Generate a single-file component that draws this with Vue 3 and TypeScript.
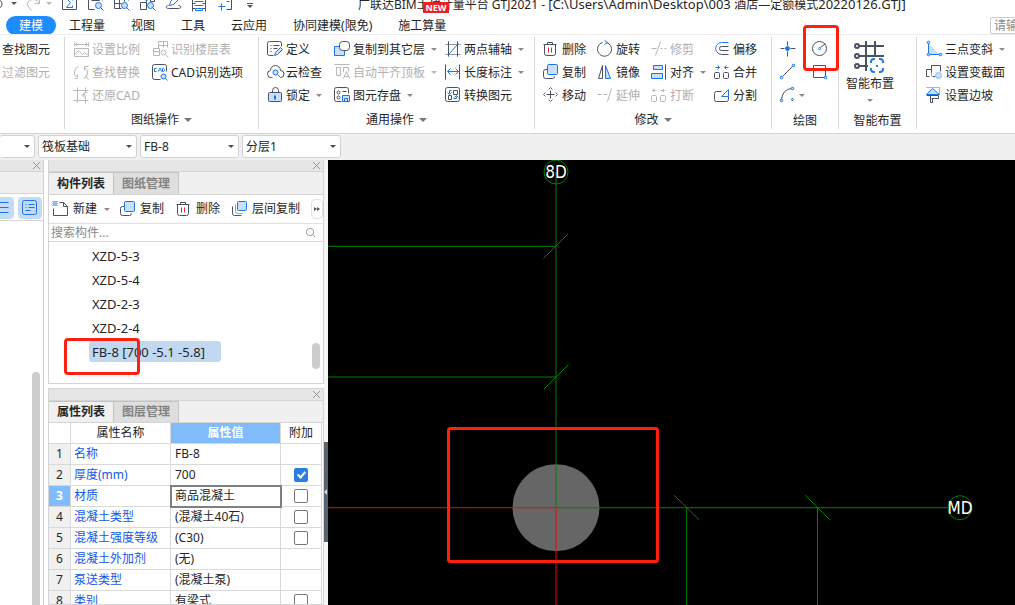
<script setup lang="ts">
import { ref } from 'vue'

interface Tool { icon: string; text: string; off?: boolean; arrow?: boolean }
interface Group { id: string; label: string; more: boolean; cols: Tool[][] }
interface Prop { name: string; value: string; check: boolean | null }

const icons: Record<string, string> = {
  undo: '<path d="M-2 4h2a4.500 4.500 0 0 1 0 9h-2"/>',
  redo: '<path d="M10 8h5V3M15 8C11 1 2 4 3 10l4 5"/>',
  sum: '<path d="M1 0v14h14V0"/><path class="b" d="M11 5V3H5l4 4-4 5h6v-2"/>',
  sheetFind: '<path d="M1 0v14h6M15 0v5M4 5h8V0M6 2v3M8 2v3M10 2v3"/><circle class="b l" cx="11" cy="10" r="3"/><path class="b" d="M13 12l3 3"/>',
  tableFind: '<path d="M1 0v13h7M6 0v13M11 0v6M15 0v5M1 3h14M1 8h7"/><circle class="b l" cx="11" cy="10" r="3"/><path class="b" d="M13 12l3 3"/>',
  floorFind: '<path d="M7 3v4H1v7h6V7M11 0v6h4V0M1 3h3"/><path class="b bf" d="M4 3l3-3 3 3-3 2z"/><circle class="b l" cx="11" cy="10" r="3"/><path class="b" d="M13 12l3 3"/>',
  pen: '<path class="b" d="M4 10l1-4 8-8 3 3-8 8z"/><path d="M3 10c-3 0-3 3 0 3h10c3 0 3-3 0-3"/>',
  beam: '<path d="M1 0v16M14 0v16M1 3h3M1 8h3M1 13h3M11 3h3M11 8h3M11 13h3"/><path class="b" d="M4 0v3h7V0M3 6h9M3 10h9M4 13h7v2H4z"/>',
  frame: '<path d="M9 0h5v14H9M2 4V0h3"/><path class="b" d="M4 8v7M1 11h7M9 6h3"/>',
  scale: '<path d="M1 1v4M15 1v4M1 3h14M4 1L2 3l2 2M12 1l2 2-2 2M1 7h14v8H1zM1 13l4-4 4 4 2-2 4 3"/>',
  replace: '<path d="M5 2a6 6 0 0 0-1 11M4 13v-3M4 14H1M10 14a6 6 0 0 0 1-11M11 6V2h4M12 11l3 4"/>',
  restore: '<path d="M4 0v15M12 0v5M12 10v6M0 3h15M0 13h15M14 5c-5 0-6 3-3 5M8 8l3-2 1 4"/>',
  floors: '<path d="M6 0v7M11 0v6M15 0v6M6 0h9M6 4h9M1 7h6v7H1zM1 10h6"/><circle cx="11" cy="11" r="2.500"/><path d="M13 13l3 3"/>',
  cad: '<path d="M8 15H2a2 2 0 0 1-2-2V2a2 2 0 0 1 2-2h10a2 2 0 0 1 2 2v5"/><path class="b" d="M4 4H2v3h2M6 7l1-3h1l1 3M10 4h1l1 1v1l-1 1h-1z"/><circle class="b l" cx="11" cy="12" r="2.500"/><path class="b" d="M13 14l2 2"/>',
  define: '<path d="M6 14H2a2 2 0 0 1-2-2V2a2 2 0 0 1 2-2h10a2 2 0 0 1 2 2v3M3 4h1M6 4h6M3 7h1M6 7h4M3 10h1"/><path class="b l" d="M7 14l1-3 5-5 2 2-5 5z"/>',
  cloud: '<path d="M5 13H4a3.500 3.500 0 0 1-1-7 5 5 0 0 1 10 0 3.500 3.500 0 0 1 0 7"/><circle class="b l" cx="8" cy="8" r="2.500"/><path class="b" d="M10 10l3 3"/>',
  lock: '<path d="M5 5V3a3 3 0 0 1 6 0v2"/><rect class="l" x="1" y="5" width="13" height="9" rx="1"/><path class="b" stroke-width="2" d="M7.500 8v4"/>',
  copyDown: '<path class="b l" d="M5 5H0v9h10V9"/><rect class="w" x="5" y="0" width="10" height="9" rx="3"/>',
  alignTop: '<path d="M0 0h15M2 3h4v8H2zM9 8V3h5v4M9 14l3-7 3 7M10 12h4"/>',
  store: '<path d="M7 14H2a2 2 0 0 1-2-2V2a2 2 0 0 1 2-2h10a2 2 0 0 1 2 2v4"/><circle cx="4" cy="5" r="1.500"/><circle cx="4" cy="10" r="1.500"/><path d="M8 4h4"/><path class="b l" d="M8 8h7v6H8z"/><path class="b" d="M10 14v-3h3v3"/>',
  axis: '<path d="M3 0v15M12 0v15M0 3h15M0 13h15" stroke="#8f96a3"/><path d="M3 0v15M12 0v15"/><path class="b" d="M3 13L13 2"/>',
  length: '<path d="M0 0v15M14 0v15"/><path class="b" d="M2 7h11M5 4L2 7l3 3M10 4l3 3-3 3"/>',
  convert: '<rect x="0" y="0" width="14" height="14" rx="2"/><path d="M3 8h3v4H3zM8 3h4v4H8z"/><path class="b" d="M6 3H4v3M2 5l2 2 2-2M8 11h3V9M9 10l2-2 2 2"/>',
  trash: '<path d="M0 3h13M4 3V1h5v2M1 3v9a2 2 0 0 0 2 2h7a2 2 0 0 0 2-2V3"/><path class="r" d="M5 6v5M8 6v5"/>',
  copy: '<path d="M4 5H2a2 2 0 0 0-2 2v5a2 2 0 0 0 2 2h7a2 2 0 0 0 2-2"/><rect class="b l" x="4" y="0" width="10" height="10" rx="1"/>',
  move: '<path d="M7 3v8M3 7h8"/><path class="b" d="M5 2l2-2 2 2M5 12l2 2 2-2M2 5L0 7l2 2M12 5l2 2-2 2"/>',
  rotate: '<path d="M9 1A7 7 0 1 1 5 1"/><path class="b" d="M7-1l3 2-3 2"/>',
  mirror: '<path d="M5 1v13H1z"/><path class="b l" d="M8 1v13h5z"/>',
  extend: '<path d="M0 7h4M6 7h4M14 1l-4 13"/>',
  trim: '<path d="M0 7h5M9 0L4 14M9 7h2M13 7h2"/>',
  align: '<path class="b l" d="M2 1h9v4H2zM0 9h11v5H0z"/><path d="M14 0v15"/>',
  breakk: '<rect x="0" y="8" width="5" height="6" rx="1"/><rect x="9" y="8" width="5" height="6" rx="1"/><path d="M1 3h4M3 1L1 3l2 2M9 3h4M11 1l2 2-2 2"/>',
  offset: '<path class="b" d="M14 1H7a6 6 0 0 0-5 9"/><path d="M2 10q2 3 5 3h7M14 5H7a2 2 0 0 0 0 4h7"/>',
  merge: '<rect x="0" y="8" width="5" height="6" rx="1"/><rect x="9" y="8" width="5" height="6" rx="1"/><path class="b" d="M1 3h4M3 1l2 2-2 2M14 3h-4M12 1l-2 2 2 2"/>',
  split: '<path d="M7 4H2a2 2 0 0 0-2 2v6a2 2 0 0 0 2 2h10a2 2 0 0 0 2-2V9"/><path class="b" d="M7 9l7-7v7z"/>',
  point: '<path d="M7 0v4M7 10v5M0 7h4M10 7h5"/><circle class="b bf" cx="7" cy="7" r="2"/>',
  circle: '<circle cx="7" cy="7" r="7"/><path d="M8 6l5-4"/><circle class="b" cx="7" cy="7" r="1"/>',
  line: '<path d="M2 12L12 2"/><circle class="b l" cx="1" cy="13" r="1.300"/><circle class="b l" cx="13" cy="1" r="1.300"/>',
  rect: '<path d="M1 1h12v12H1z"/><circle class="b l" cx="13" cy="13" r="1.300"/>',
  arc: '<path d="M1 12Q2 2 11 1"/><circle class="b l" cx="1" cy="13" r="1.300"/><circle class="b l" cx="12" cy="1" r="1.300"/><circle class="b l" cx="12" cy="12" r="1"/>',
  slope: '<path class="l" stroke="none" d="M2 2v11h11z"/><path class="b" d="M2 2v11h11"/><circle class="b l" cx="2" cy="1" r="1.300"/><circle class="b l" cx="2" cy="13" r="1.300"/><circle class="b l" cx="14" cy="13" r="1.300"/>',
  section: '<path d="M9 12H6M3 12H0V5h5v3M5 5V1h9v6"/><path d="M5 8v3" stroke-dasharray="1 1"/><circle class="l" cx="12" cy="11" r="3" stroke="#8bb8f0"/>',
  side: '<path class="b l" d="M0 7l6-6 7 6z"/><path class="b" d="M0 0h13v7" stroke-dasharray="1 1"/><path d="M0 8h12v3H5M4 8v7h2v-4"/>',
  create: '<path d="M6 1h4l4 4v9H0V7M10 1v4h4"/><path d="M-1 0h5M-1 2h5M-1 4h5" stroke="#1a76e8" stroke-dasharray="1 1"/><path d="M0 1h4M0 3h4" stroke="#1a76e8" stroke-dasharray="1 1"/>',
  layerCopy: '<path d="M0 5v7a2 2 0 0 0 2 2h7"/><path d="M3 3v7a2 2 0 0 0 2 2h5" stroke="#8fa6c8"/><rect class="b l" x="5" y="0" width="9" height="9" rx="1"/>'
}

const quick = ['sum', 'sheetFind', 'tableFind', 'floorFind', 'pen', 'beam', 'frame']

const tabs = ['建模', '工程量', '视图', '工具', '云应用', '协同建模(限免)', '施工算量']
const activeTab = ref('建模')

const groups: Group[] = [
  { id: 'sheet', label: '图纸操作', more: true, cols: [
    [{ icon: 'scale', text: '设置比例', off: true }, { icon: 'replace', text: '查找替换', off: true }, { icon: 'restore', text: '还原CAD', off: true }],
    [{ icon: 'floors', text: '识别楼层表', off: true }, { icon: 'cad', text: 'CAD识别选项' }]
  ] },
  { id: 'common', label: '通用操作', more: true, cols: [
    [{ icon: 'define', text: '定义' }, { icon: 'cloud', text: '云检查' }, { icon: 'lock', text: '锁定', arrow: true }],
    [{ icon: 'copyDown', text: '复制到其它层', arrow: true }, { icon: 'alignTop', text: '自动平齐顶板', off: true, arrow: true }, { icon: 'store', text: '图元存盘', arrow: true }],
    [{ icon: 'axis', text: '两点辅轴', arrow: true }, { icon: 'length', text: '长度标注', arrow: true }, { icon: 'convert', text: '转换图元' }]
  ] },
  { id: 'modify', label: '修改', more: true, cols: [
    [{ icon: 'trash', text: '删除' }, { icon: 'copy', text: '复制' }, { icon: 'move', text: '移动' }],
    [{ icon: 'rotate', text: '旋转' }, { icon: 'mirror', text: '镜像' }, { icon: 'extend', text: '延伸', off: true }],
    [{ icon: 'trim', text: '修剪', off: true }, { icon: 'align', text: '对齐', arrow: true }, { icon: 'breakk', text: '打断', off: true }],
    [{ icon: 'offset', text: '偏移' }, { icon: 'merge', text: '合并' }, { icon: 'split', text: '分割' }]
  ] }
]

const slopeTools: Tool[] = [
  { icon: 'slope', text: '三点变斜', arrow: true },
  { icon: 'section', text: '设置变截面' },
  { icon: 'side', text: '设置边坡' }
]

const combos = [
  { label: '构件类型', value: '筏板基础' },
  { label: '构件', value: 'FB-8' },
  { label: '分层', value: '分层1' }
]

const listTools: Tool[] = [
  { icon: 'create', text: '新建', arrow: true },
  { icon: 'copy', text: '复制' },
  { icon: 'trash', text: '删除' },
  { icon: 'layerCopy', text: '层间复制' }
]

const members = ['XZD-5-3', 'XZD-5-4', 'XZD-2-3', 'XZD-2-4', 'FB-8 [700 -5.1 -5.8]']
const selected = ref(4)

const props = ref<Prop[]>([
  { name: '名称', value: 'FB-8', check: null },
  { name: '厚度(mm)', value: '700', check: true },
  { name: '材质', value: '商品混凝土', check: false },
  { name: '混凝土类型', value: '(混凝土40石)', check: false },
  { name: '混凝土强度等级', value: '(C30)', check: false },
  { name: '混凝土外加剂', value: '(无)', check: null },
  { name: '泵送类型', value: '(混凝土泵)', check: null },
  { name: '类别', value: '有梁式', check: false }
])
const currentRow = ref(2)
const keyword = ref('')
const command = ref('')
</script>

<template>
  <div class="app">
    <header class="title-bar">
      <div class="quick">
        <button class="q undo" aria-label="撤销"><svg class="ic" viewBox="-.5 -.5 8 16" v-html="icons.undo" /><i class="arrow dark" /></button>
        <button class="q redo off" aria-label="重做"><svg class="ic" viewBox="-.5 -.5 16 16" v-html="icons.redo" /><i class="arrow" /></button>
        <button v-for="q in quick" :key="q" class="q" :aria-label="q">
          <svg class="ic" viewBox="-.5 -.5 16 16" v-html="icons[q]" />
        </button>
        <button class="q custom" aria-label="自定义"><i class="bar" /><i class="arrow dark" /></button>
      </div>
      <div class="title">广联达BIM土建计量平台 GTJ2021 - <span class="path">[C:\Users\Admin\Desktop\003 </span>酒店—定额模式<span class="path">20220126.GTJ]</span><span class="new">NEW</span></div>
    </header>

    <nav class="tabs">
      <button v-for="t in tabs" :key="t" class="tab" :class="{ on: t === activeTab }" @click="activeTab = t">{{ t }}</button>
      <input v-model="command" class="command" type="text" placeholder="请输入" aria-label="命令搜索">
    </nav>

    <section class="ribbon">
      <div class="group find">
        <button class="tool">查找图元</button>
        <button class="tool off">过滤图元</button>
      </div>
      <div v-for="g in groups" :key="g.id" class="group" :class="g.id">
        <div class="cols">
          <div v-for="(col, c) in g.cols" :key="c" class="col">
            <button v-for="t in col" :key="t.text" class="tool" :class="{ off: t.off }">
              <svg class="ic" viewBox="-.5 -.5 16 16" v-html="icons[t.icon]" />
              <span>{{ t.text }}</span>
              <i v-if="t.arrow" class="arrow" />
            </button>
          </div>
        </div>
        <div class="group-label">{{ g.label }}<i v-if="g.more" class="arrow big" /></div>
      </div>
      <div class="group draw">
        <div class="draw-grid">
          <button class="tool" aria-label="点"><svg class="ic" viewBox="-.5 -.5 16 16" v-html="icons.point" /></button>
          <button class="tool marked" aria-label="圆"><svg class="ic" viewBox="-.5 -.5 16 16" v-html="icons.circle" /><span class="mark" /></button>
          <button class="tool" aria-label="直线"><svg class="ic" viewBox="-.5 -.5 16 16" v-html="icons.line" /></button>
          <button class="tool" aria-label="矩形"><svg class="ic" viewBox="-.5 -.5 16 16" v-html="icons.rect" /></button>
          <button class="tool" aria-label="弧"><svg class="ic" viewBox="-.5 -.5 16 16" v-html="icons.arc" /><i class="arrow near" /></button>
        </div>
        <div class="group-label low">绘图</div>
      </div>
      <div class="group smart">
        <button class="smart-btn">
          <svg class="smart-ic" viewBox="0 0 32 32">
            <g fill="none" stroke="#4a5163" stroke-width="2">
              <path d="M12 1v30M21 1v14M5 6h25M5 16h25M5 26h9" />
              <circle cx="3" cy="6" r="2" /><circle cx="3" cy="16" r="2" /><circle cx="3" cy="26" r="2" />
            </g>
            <path d="M16 18h15v14H16z" fill="#fff" />
            <g fill="none" stroke="#1a7cf0" stroke-width="2">
              <path d="M17 23v-1q0-3 3-3h1M25 19h1q3 0 3 3v1M29 28v1q0 3-3 3h-1M21 32h-1q-3 0-3-3v-1" />
              <path d="M22 26h2" />
            </g>
          </svg>
          <span>智能布置</span>
          <i class="arrow" />
        </button>
        <div class="group-label low">智能布置</div>
      </div>
      <div class="group slope">
        <button v-for="t in slopeTools" :key="t.text" class="tool">
          <svg class="ic" viewBox="-.5 -.5 16 16" v-html="icons[t.icon]" />
          <span>{{ t.text }}</span>
          <i v-if="t.arrow" class="arrow" />
        </button>
      </div>
    </section>

    <section class="selectors">
      <label class="combo first"><select aria-label="楼层"><option></option></select></label>
      <label v-for="c in combos" :key="c.label" class="combo">
        <select :aria-label="c.label"><option>{{ c.value }}</option></select>
      </label>
    </section>

    <main class="work">
      <aside class="nav-pane">
        <div class="pane-head"><button class="close" aria-label="关闭"><svg viewBox="0 0 8 8"><path d="M0 0l8 8M8 0L0 8" /></svg></button></div>
        <div class="nav-gap" />
        <div class="nav-tools">
          <button class="view left" aria-label="列表"><svg class="ic" viewBox="-.5 -.5 9 16"><path class="b" d="M-2 2h10M-2 7h10M-2 12h10" /></svg></button>
          <button class="view" aria-label="详情"><svg class="ic" viewBox="-.5 -.5 16 16"><rect class="b" x="0" y="0" width="14" height="14" rx="2" /><path class="b" d="M3 4h1M6 4h6M3 7h1M6 7h6M3 10h5" /></svg></button>
        </div>
        <div class="nav-body"><i class="thumb" /></div>
      </aside>

      <div class="side">
        <section class="pane">
          <div class="pane-head"><button class="close" aria-label="关闭"><svg viewBox="0 0 8 8"><path d="M0 0l8 8M8 0L0 8" /></svg></button></div>
          <div class="pane-tabs"><button class="ptab on">构件列表</button><button class="ptab">图纸管理</button></div>
          <div class="list-tools">
            <button v-for="t in listTools" :key="t.text" class="tool">
              <svg class="ic" viewBox="-.5 -.5 16 16" v-html="icons[t.icon]" />
              <span>{{ t.text }}</span>
              <i v-if="t.arrow" class="arrow" />
            </button>
            <button class="more" aria-label="更多"><i /><i /></button>
          </div>
          <div class="search">
            <input v-model="keyword" type="text" placeholder="搜索构件..." aria-label="搜索构件">
            <svg viewBox="0 0 12 12"><circle cx="5.500" cy="5.500" r="4" /><path d="M8.500 8.500L11 11" /></svg>
          </div>
          <div class="list">
            <button v-for="(m, i) in members" :key="m" class="member" :class="{ on: i === selected }" @click="selected = i">{{ m }}</button>
            <i class="thumb" />
            <span class="mark" />
          </div>
        </section>

        <section class="pane grow">
          <div class="pane-head"><button class="close" aria-label="关闭"><svg viewBox="0 0 8 8"><path d="M0 0l8 8M8 0L0 8" /></svg></button></div>
          <div class="pane-tabs"><button class="ptab on">属性列表</button><button class="ptab">图层管理</button></div>
          <table class="props">
            <colgroup><col class="c1"><col class="c2"><col class="c3"><col class="c4"></colgroup>
            <thead>
              <tr><th /><th>属性名称</th><th class="cur">属性值</th><th>附加</th></tr>
            </thead>
            <tbody>
              <tr v-for="(p, i) in props" :key="p.name" :class="{ cur: i === currentRow }" @click="currentRow = i">
                <th scope="row">{{ i + 1 }}</th>
                <td class="name">{{ p.name }}</td>
                <td class="value">{{ p.value }}</td>
                <td class="chk"><input v-if="p.check !== null" v-model="p.check" type="checkbox" :aria-label="p.name + ' 附加'"></td>
              </tr>
            </tbody>
          </table>
        </section>
      </div>

      <div class="splitter"><button aria-label="折叠面板"><i /></button></div>

      <svg class="canvas">
        <circle cx="228" cy="347.700" r="43.500" fill="#666" />
        <g fill="none" stroke="#008000">
          <path d="M228 12V347M0 86.300H228M0 217H228M228 347.700H620M358.700 348V1200M489.500 348V1200" />
          <path d="M215.500 98.500L240 74M216 229L240.500 204.500M346.300 335.300L371 359.700M477.300 335.300L502 360" />
          <circle cx="228" cy="12" r="12" />
          <circle cx="632" cy="347.700" r="12" />
        </g>
        <path d="M0 347.700H228M228 348V1200" fill="none" stroke="#f00" />
        <text x="228" y="18">8D</text>
        <text x="632" y="354">MD</text>
        <rect x="120.500" y="268.500" width="209" height="133" rx="2" fill="none" stroke="#ff1e10" stroke-width="3" />
      </svg>
    </main>
  </div>
</template>

<style>
html, body { margin: 0; background: #fff; overflow: hidden; }
.ic { fill: none; stroke: #4a5163; stroke-width: 1; width: 16px; height: 16px; flex: none; overflow: visible; }
.ic .b { stroke: #1a76e8; }
.ic .l { fill: #c9e0fb; }
.ic .w { fill: #fff; }
.ic .bf { fill: #1a76e8; }
.ic .r { stroke: #e0262c; }
.off .ic { stroke: #b8b8b8; }
</style>

<style scoped>
.app {
  height: 100vh; display: flex; flex-direction: column; overflow: hidden; background: #fff; color: #262626;
  font-family: "Noto Sans", "Noto Sans CJK SC", sans-serif; font-size: 12px; line-height: 16px;
}
button, input, select { font: inherit; color: inherit; }
button { border: 0; background: none; padding: 0; margin: 0; white-space: nowrap; }
i { display: block; flex: none; }

.arrow { border: 3px solid transparent; border-top: 3px solid #8a8a8a; border-bottom: 0; margin-left: 3px; }
.arrow.dark { border-top-color: #555; }
.arrow.big { border-width: 4px 4px 0; margin-left: 5px; border-top-color: #777; }
.off .arrow { border-top-color: #b8b8b8; }

.title-bar { height: 11px; padding-bottom: 5px; display: flex; align-items: flex-end; flex: none; }
.quick { display: flex; align-items: flex-end; width: 358px; flex: none; gap: 10px; }
.q { display: flex; align-items: center; flex: none; }
.q .arrow { margin-left: 6px; }
.undo { width: 17px; margin-left: -3px; }
.undo .ic { width: 8px; }
.redo { width: 27px; }
.q.custom { flex-direction: column; gap: 1px; margin-left: 4px; padding-bottom: 3px; }
.q.custom .arrow { margin: 0; }
.bar { width: 6px; height: 1px; background: #555; }
.title { position: relative; white-space: pre; font-size: 12px; line-height: 12px; }
.path { font-size: 13px; line-height: 12px; }
.new { position: absolute; left: 65px; top: 4px; width: 26px; height: 11px; line-height: 11px; background: #e32424; color: #fff; font-size: 9px; font-weight: 700; text-align: center; }

.tabs { display: flex; align-items: center; height: 18px; padding-left: 6px; flex: none; }
.tab { height: 19px; padding: 0 13px; border-radius: 10px; line-height: 19px; flex: none; }
.tab.on { background: #1c8cff; color: #fff; }
.command { box-sizing: border-box; width: 140px; height: 17px; margin-left: auto; margin-right: -115px; flex: none; border: 1px solid #ccc; border-radius: 2px; padding: 0 3px; outline: 0; }
.command::placeholder { color: #8c8c8c; opacity: 1; }

.ribbon { display: flex; height: 98px; flex: none; border-top: 1px solid #ececec; border-bottom: 1px solid #d4d4d4; }
.group { box-sizing: border-box; margin: 2px 0 4px; padding-top: 1px; border-right: 1px solid #d8d8d8; display: flex; flex-direction: column; flex: none; }
.cols { display: grid; height: 69px; flex: none; }
.tool { display: flex; align-items: center; gap: 3px; height: 23px; }
.tool .ic { margin-bottom: 1px; }
.tool.off { color: #b0b0b0; }
.group-label { display: flex; align-items: center; justify-content: center; height: 25px; flex: none; }
.group-label.low { height: 28px; }
.find { width: 65px; padding-left: 2px; }
.sheet { width: 194px; }
.sheet .cols { grid-template-columns: 79px auto; padding-left: 8px; }
.common { width: 276px; }
.common .cols { grid-template-columns: 67px 111px auto; padding-left: 8px; }
.modify { width: 237px; }
.modify .cols { grid-template-columns: 54px 54px 63px auto; padding-left: 8px; }
.draw { width: 67px; }
.draw-grid { display: grid; grid-template-columns: 32px 16px; height: 69px; padding-left: 8px; flex: none; }
.arrow.near { margin-left: 0; }
.marked { position: relative; }
.mark { position: absolute; box-sizing: border-box; border: 3px solid #ff1e10; border-radius: 4px; z-index: 2; }
.marked .mark { left: -9px; top: -13px; width: 36px; height: 46px; }
.smart { width: 78px; }
.smart-btn { display: flex; flex-direction: column; align-items: center; width: 48px; height: 69px; margin-left: 7px; flex: none; }
.smart-ic { width: 32px; height: 32px; margin: 2px 0 4px; overflow: visible; flex: none; }
.smart-btn .arrow { margin: 7px 0 0; }
.slope { flex: 1; padding-left: 9px; border-right: 0; min-width: 0; }

.selectors { display: flex; gap: 3px; height: 24px; padding: 1px 0; background: #f0f0f0; flex: none; }
.combo { position: relative; box-sizing: border-box; width: 99px; height: 23px; background: #fff; border: 1px solid #d2d2d2; border-radius: 3px; }
.combo.first { width: 35px; border-left: 0; }
.combo select { appearance: none; width: 100%; height: 21px; border: 0; background: none; padding: 0 16px 0 3px; outline: 0; }
.combo::after { content: ""; position: absolute; right: 4px; top: 9px; border: 3px solid transparent; border-top: 3px solid #4a4a4a; border-bottom: 0; pointer-events: none; }

.work { display: flex; flex: 1; min-height: 0; }
.nav-pane { width: 43px; border-right: 1px solid #d0d0d0; margin-right: 4px; display: flex; flex-direction: column; flex: none; }
.pane-head { box-sizing: border-box; height: 12px; background: #e6e6e6; border-bottom: 1px solid #d4d4d4; display: flex; justify-content: flex-end; align-items: center; padding-right: 3px; flex: none; }
.close { display: flex; }
.close svg { width: 7px; height: 7px; stroke: #8c8c8c; fill: none; overflow: visible; }
.nav-gap { height: 22px; background: #f0f0f0; border-bottom: 1px solid #d4d4d4; box-sizing: border-box; flex: none; }
.nav-tools { display: flex; justify-content: space-between; height: 27px; padding: 3px 1px 0 0; box-sizing: border-box; border-bottom: 1px solid #d4d4d4; flex: none; }
.view { width: 24px; height: 22px; border-radius: 4px; background: #c4dbf3; display: flex; align-items: center; justify-content: center; }
.view.left { width: 14px; border-radius: 0 4px 4px 0; justify-content: flex-start; }
.view.left .ic { width: 9px; }
.nav-body { flex: 1; display: flex; justify-content: flex-end; padding: 151px 3px 0 0; min-height: 0; }
.thumb { background: #cdcdcd; border-radius: 4px; width: 8px; }
.nav-body .thumb { border-radius: 4px 4px 0 0; }

.side { width: 276px; display: flex; flex-direction: column; gap: 4px; flex: none; }
.pane { box-sizing: border-box; border: 1px solid #d4d4d4; border-top: 0; display: flex; flex-direction: column; flex: none; }
.pane.grow { flex: 1; min-height: 0; overflow: hidden; border-top: 1px solid #d4d4d4; }
.pane-tabs { display: flex; height: 23px; background: #f0f0f0; border-bottom: 1px solid #d4d4d4; box-sizing: border-box; flex: none; }
.grow .pane-tabs { height: 22px; }
.ptab { box-sizing: border-box; width: 65px; border-right: 1px solid #c0c4ca; border-top: 1px solid #c0c4ca; font-weight: 700; background: #f0f0f0; }
.ptab + .ptab { background: #dedede; color: #828282; }
.list-tools { display: flex; align-items: center; height: 28px; padding-left: 4px; flex: none; box-sizing: border-box; }
.list-tools .tool { gap: 4px; margin-right: 12px; }
.list-tools .tool:first-child { margin-right: 10px; }
.list-tools .tool:nth-child(4) { margin-right: 0; }
.more { box-sizing: border-box; width: 12px; height: 20px; margin-left: auto; border: 1px solid #e2e2e2; border-radius: 4px; display: flex; align-items: center; justify-content: center; flex: none; }
.more i { border: 2px solid transparent; border-left: 3px solid #555; border-right: 0; }
.search { box-sizing: border-box; height: 19px; display: flex; align-items: center; padding: 0 7px 0 2px; border-top: 1px solid #e0e0e0; border-bottom: 1px solid #d8d8d8; flex: none; }
.search input { flex: 1; min-width: 0; border: 0; padding: 0; outline: 0; height: 16px; }
.search input::placeholder { color: #8a8a8a; opacity: 1; }
.search svg { width: 11px; height: 11px; fill: none; stroke: #999; }
.list { position: relative; height: 141px; padding-top: 3px; box-sizing: border-box; display: flex; flex-direction: column; align-items: flex-start; gap: 3px; padding-left: 40px; }
.member { height: 21px; padding: 0 16px 0 3px; font-size: 13px; border-radius: 3px; text-align: left; }
.member.on { background: #c1d8f0; }
.list .thumb { position: absolute; right: 3px; top: 101px; height: 26px; }
.list .mark { left: 15px; top: 96px; width: 76px; height: 37px; }

.props { border-collapse: separate; border-spacing: 0; table-layout: fixed; width: 273px; flex: none; }
.c1 { width: 22px; } .c2 { width: 100px; } .c3 { width: 110px; } .c4 { width: 41px; }
.props th, .props td { box-sizing: border-box; height: 21px; padding: 0 0 0 4px; border-right: 1px solid #d9d9d9; border-bottom: 1px solid #d9d9d9; font-weight: 400; line-height: 20px; white-space: nowrap; }
.props th { padding: 0; text-align: center; }
.props tbody th { background: #f0f0f0; }
.props th.cur { background: #80bbfb; color: #fff; font-weight: 700; }
.props tr.cur th { background: #80bbfb; color: #fff; font-weight: 700; }
.props .name { color: #1557e6; padding-left: 3px; }
.props tr.cur .value { outline: 2px solid #808080; outline-offset: -1px; }
.props .chk { padding: 0; text-align: center; }
.chk input { appearance: none; display: block; position: relative; box-sizing: border-box; width: 14px; height: 14px; margin: 0 auto; border: 1px solid #777; border-radius: 2px; background: #fff; }
.chk input:checked { background: #2a7fe4; border-color: #2a7fe4; }
.chk input:checked::after { content: ""; position: absolute; left: 4px; top: 1px; width: 3px; height: 6px; border: solid #fff; border-width: 0 2px 2px 0; transform: rotate(42deg); }

.splitter { width: 4px; background: #f5f5f5; padding-top: 282px; box-sizing: border-box; flex: none; }
.splitter button { width: 4px; height: 100px; background: #5b6570; display: flex; align-items: center; }
.splitter i { border: 3px solid transparent; border-right: 3px solid #d5d9dd; border-left: 0; }
.canvas { flex: 1; min-width: 0; height: 100%; background: #000; display: block; }
.canvas text { fill: #fff; font-family: "DejaVu Sans Condensed", "DejaVu Sans", sans-serif; font-size: 17px; text-anchor: middle; }
</style>
